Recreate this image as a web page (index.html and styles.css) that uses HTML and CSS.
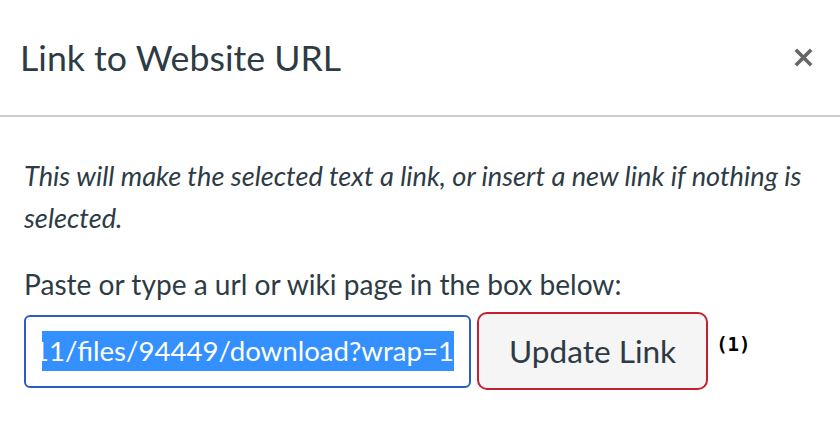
FILE: index.html
```html
<!DOCTYPE html>
<html lang="en">
<head>
<meta charset="utf-8">
<title>Link to Website URL</title>
<link rel="stylesheet" href="styles.css">
</head>
<body>
<div class="dialog">
  <header class="dialog-header">
    <h1 class="dialog-title">Link to Website URL</h1>
    <button class="close-btn" aria-label="Close">
      <svg width="19" height="19" viewBox="0 0 19 19" aria-hidden="true">
        <path d="M1.8 1.8 L17.2 17.2 M17.2 1.8 L1.8 17.2" stroke="#666" stroke-width="3.6" stroke-linecap="butt" fill="none"/>
      </svg>
    </button>
  </header>
  <div class="dialog-body">
    <p class="hint">This will make the selected text a link, or insert a new link if nothing is selected.</p>
    <p class="label">Paste or type a url or wiki page in the box below:</p>
    <div class="field-row">
      <div class="url-input">
        <div class="url-clip"><span class="url-text">https://canvas.instructure.com/courses/2011/files/94449/download?wrap=1</span></div>
      </div>
      <button class="update-btn">Update Link</button>
      <span class="marker">(1)</span>
    </div>
  </div>
</div>
</body>
</html>
```

FILE: styles.css
```css
html, body {
  margin: 0;
  padding: 0;
  background: #ffffff;
}

body {
  font-family: Lato, "Noto Sans", sans-serif;
  color: #2d3b45;
}

.dialog {
  width: 840px;
}

.dialog-header {
  display: flex;
  align-items: center;
  justify-content: space-between;
  height: 115px;
  padding: 0 27px 0 20px;
  border-bottom: 2px solid #c7cdd1;
}

.dialog-title {
  margin: 0;
  font-size: 35.7px;
  font-weight: 400;
  line-height: 44px;
  color: #2d3b45;
}

.close-btn {
  display: flex;
  align-items: center;
  justify-content: center;
  width: 19px;
  height: 19px;
  padding: 0;
  margin: 0;
  border: 0;
  background: transparent;
}

.dialog-body {
  padding: 38px 20px 0 24px;
}

.hint {
  margin: 0 0 24px 0;
  font-size: 27.2px;
  font-style: italic;
  line-height: 42px;
}

.label {
  margin: 0;
  font-size: 28.1px;
  line-height: 42px;
}

.field-row {
  display: flex;
  align-items: center;
  margin-top: 7px;
}

.url-input {
  box-sizing: border-box;
  width: 447px;
  height: 73px;
  border: 2px solid #2a5ec6;
  border-radius: 6px;
  padding: 0 15px 0 16px;
  display: flex;
  align-items: center;
  background: #ffffff;
}

.url-clip {
  flex: 1;
  display: flex;
  justify-content: flex-end;
  overflow: hidden;
  white-space: nowrap;
}

.url-text {
  flex: none;
  display: block;
  height: 40px;
  line-height: 40px;
  font-size: 27.6px;
  background: #3390fe;
  color: #ffffff;
}

.update-btn {
  box-sizing: border-box;
  height: 78px;
  margin-left: 6px;
  padding: 0 30px;
  border: 2.5px solid #c3212f;
  border-radius: 10px;
  background: #f5f5f5;
  font-family: Lato, "Noto Sans", sans-serif;
  font-size: 31.6px;
  color: #2d3b45;
}

.marker {
  align-self: flex-start;
  margin-left: 8px;
  margin-top: 21px;
  font-family: "DejaVu Sans Mono", monospace;
  font-weight: 700;
  font-size: 19px;
  line-height: 22px;
  color: #000000;
}
```
